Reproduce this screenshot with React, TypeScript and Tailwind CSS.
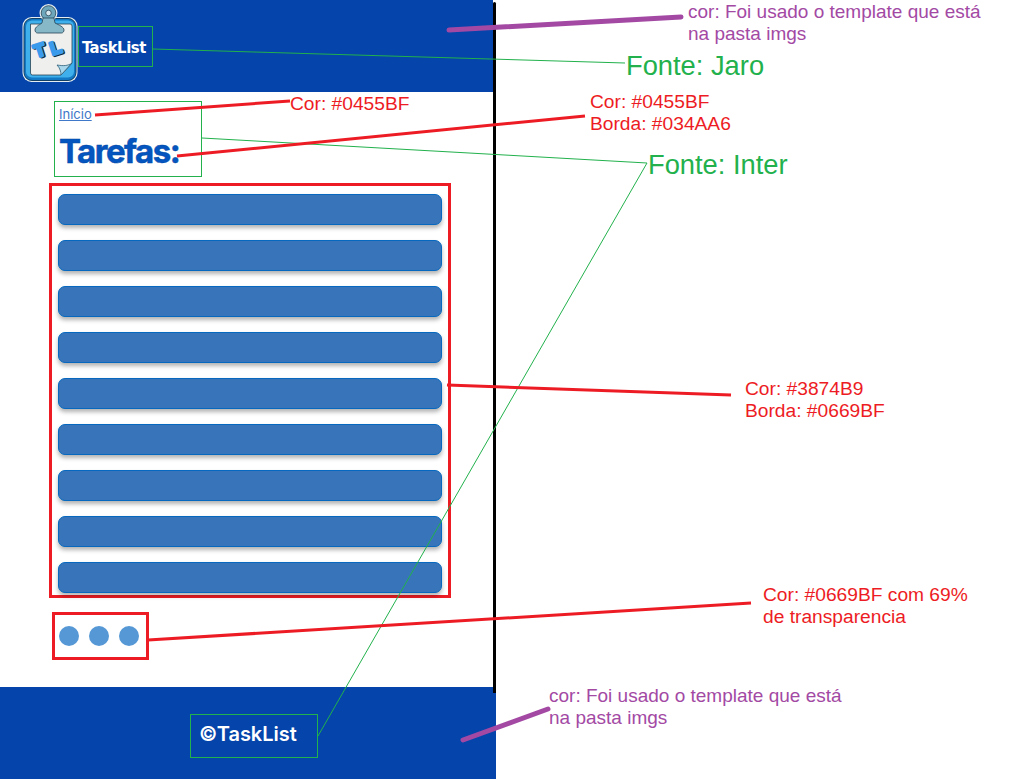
const TASKS = [1, 2, 3, 4, 5, 6, 7, 8, 9];

function Logo() {
  return (
    <svg width="58" height="80" viewBox="0 0 58 80" className="shrink-0">
      {/* board */}
      <rect x="1.500" y="14" width="55" height="65" rx="9" fill="#e4edf1" />
      <rect x="3" y="15.500" width="52" height="62" rx="8" fill="#1379c4" stroke="#123f63" strokeWidth="1" />
      <rect x="5" y="17.500" width="48" height="57" rx="6" fill="#3fb0ec" />
      {/* paper */}
      <path d="M9.500 21 H49 a2 2 0 0 1 2 2 V60 L40 72 H11.500 a2 2 0 0 1 -2 -2 Z" fill="#efefed" stroke="#274455" strokeWidth="0.8" />
      <path d="M40 72 L51 60 C47 63 42 63 36 62 C39 65 40 69 40 72 Z" fill="#a8d6ea" stroke="#2f5f78" strokeWidth="0.8" />
      {/* clip */}
      <circle cx="27.500" cy="10" r="9" fill="#e4edf1" />
      <circle cx="27.500" cy="10" r="7.300" fill="#6ea7bc" stroke="#274455" strokeWidth="0.8" />
      <circle cx="27.500" cy="10" r="2.800" fill="#d8e8ee" stroke="#274455" strokeWidth="0.8" />
      <path d="M22 15 H33 L34 20 C38 22 43 24 43 27 C43 28.500 42 30 40.500 30 H16.500 C15 30 14 28.500 14 27 C14 24 18 22 21 20 Z" fill="#86b8c8" stroke="#274455" strokeWidth="0.8" />
      {/* initials */}
      <g fontFamily="'Liberation Sans', sans-serif" fontWeight="700" fontSize="18" strokeLinejoin="round">
        <g fill="#14283a" stroke="#14283a" strokeWidth="3">
          <text x="15" y="53" transform="rotate(-18 23 49)">T</text>
          <text x="31" y="51" transform="rotate(-18 38 47)">L</text>
        </g>
        <g fill="#3a9bec" stroke="#3a9bec" strokeWidth="3">
          <text x="14" y="52" transform="rotate(-18 23 49)">T</text>
          <text x="30" y="50" transform="rotate(-18 38 47)">L</text>
        </g>
      </g>
    </svg>
  );
}

function Annotations() {
  return (
    <>
      {/* drawn callout lines */}
      <svg className="absolute inset-0 pointer-events-none" width="1012" height="779">
        <line x1="153" y1="49" x2="625" y2="63" stroke="#22b14c" />
        <line x1="202" y1="138" x2="647" y2="163" stroke="#22b14c" />
        <line x1="647" y1="163" x2="318" y2="736" stroke="#22b14c" />
        <line x1="95" y1="115" x2="290" y2="101" stroke="#ed1c24" strokeWidth="3" />
        <line x1="177" y1="156" x2="585" y2="116" stroke="#ed1c24" strokeWidth="3" />
        <line x1="447" y1="385" x2="731" y2="395" stroke="#ed1c24" strokeWidth="3" />
        <line x1="148" y1="640" x2="751" y2="603" stroke="#ed1c24" strokeWidth="3" />
        <line x1="449" y1="30" x2="681" y2="17" stroke="#a349a4" strokeWidth="5" strokeLinecap="round" />
        <line x1="463" y1="740" x2="548" y2="709" stroke="#a349a4" strokeWidth="5" strokeLinecap="round" />
      </svg>

      <div className="absolute left-[688px] top-[1px] text-[19px] leading-[22px] text-[#a349a4]">
        cor: Foi usado o template que está<br />na pasta imgs
      </div>
      <div className="absolute left-[626px] top-[51px] text-[27.3px] leading-[30px] text-[#22b14c]">Fonte: Jaro</div>
      <div className="absolute left-[590px] top-[91px] text-[19.2px] leading-[22px] text-[#ed1c24]">
        Cor: #0455BF<br />Borda: #034AA6
      </div>
      <div className="absolute left-[290px] top-[93px] text-[19.2px] leading-[22px] text-[#ed1c24]">Cor: #0455BF</div>
      <div className="absolute left-[648px] top-[150px] text-[27.3px] leading-[30px] text-[#22b14c]">Fonte: Inter</div>
      <div className="absolute left-[745px] top-[378px] text-[19.2px] leading-[22px] text-[#ed1c24]">
        Cor: #3874B9<br />Borda: #0669BF
      </div>
      <div className="absolute left-[763px] top-[584px] text-[19.2px] leading-[22px] text-[#ed1c24]">
        Cor: #0669BF com 69%<br />de transparencia
      </div>
      <div className="absolute left-[549px] top-[685px] text-[19px] leading-[22px] text-[#a349a4]">
        cor: Foi usado o template que está<br />na pasta imgs
      </div>
    </>
  );
}

export default function App() {
  return (
    <div className="relative h-[779px] w-[1012px] overflow-hidden bg-white font-['Liberation_Sans',sans-serif]">
      <div className="flex h-full w-[496px] flex-col">
        {/* Header */}
        <header className="flex h-[92px] w-[493px] shrink-0 items-start bg-[#0444ab] pl-[21px] pt-[3px]">
          <Logo />
          <div className="ml-[-1px] mt-[23px] flex h-[41px] w-[75px] items-center border border-[#22b14c] pl-[3px] pt-[3px]">
            <span className="font-['DejaVu_Sans',sans-serif] text-[16.5px] font-bold tracking-[-0.4px] text-white [font-stretch:condensed]">
              TaskList
            </span>
          </div>
        </header>

        {/* Main */}
        <main className="flex-1 pt-[9px]">
          <div className="ml-[54px] h-[76px] w-[148px] border border-[#22b14c] px-1 font-['Inter',sans-serif]">
            <a href="#" className="mt-[3px] block text-[13px] leading-[18px] text-[#3f77c9] underline">Início</a>
            <h1 className="mt-[8px] text-[33px] font-bold leading-[40px] tracking-[-1.5px] text-[#0455bf] [-webkit-text-stroke:0.5px_#034aa6]">
              Tarefas:
            </h1>
          </div>

          <ul className="ml-[49px] mt-[6px] flex w-[402px] flex-col gap-[15px] border-[3px] border-[#ed1c24] pb-[2px] pl-[6px] pr-[6px] pt-[8px]">
            {TASKS.map((task) => (
              <li key={task} className="h-[31px] rounded-[7px] border border-[#0669bf] bg-[#3874b9] shadow-[0_3px_4px_rgba(0,0,0,0.3)]" />
            ))}
          </ul>

          <div className="ml-[52px] mt-[14px] flex h-[48px] w-[97px] items-center gap-[10px] border-[3px] border-[#ed1c24] pl-[4px]">
            <span className="h-5 w-5 rounded-full bg-[#5598d5]" />
            <span className="h-5 w-5 rounded-full bg-[#5598d5]" />
            <span className="h-5 w-5 rounded-full bg-[#5598d5]" />
          </div>
        </main>

        {/* Footer */}
        <footer className="h-[92px] shrink-0 bg-[#0444ab] pl-[190px] pt-[27px]">
          <div className="flex h-[44px] w-[128px] items-center border border-[#22b14c] pb-[4px] pl-[8px] font-['Inter',sans-serif] text-[20px] font-semibold text-white">
            ©TaskList
          </div>
        </footer>
      </div>

      {/* black divider */}
      <div className="absolute left-[493px] top-[2px] h-[691px] w-[3px] rounded-t-sm bg-black" />

      <Annotations />
    </div>
  );
}
